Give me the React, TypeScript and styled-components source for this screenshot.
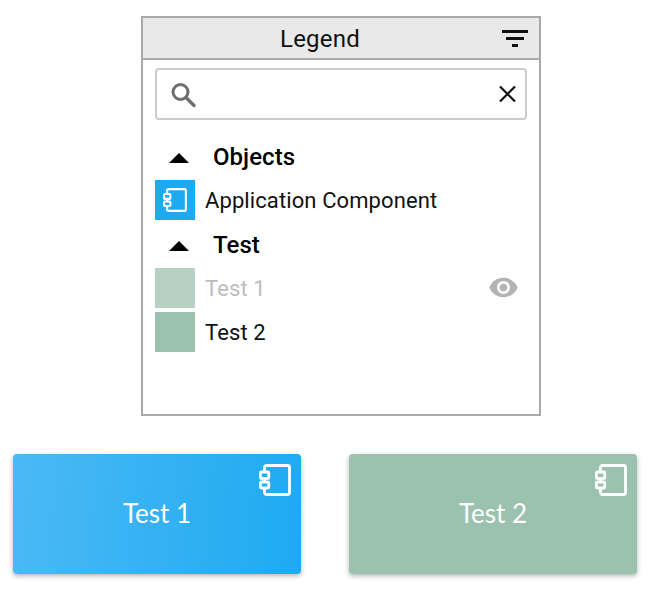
import React from 'react';
import styled, { createGlobalStyle } from 'styled-components';

const GlobalStyle = createGlobalStyle`
  html, body {
    margin: 0;
    padding: 0;
    background: #fff;
    font-family: "Roboto", "Liberation Sans", sans-serif;
  }
`;

const Page = styled.div`
  width: 653px;
  height: 596px;
  padding-top: 16px;
  box-sizing: border-box;
  overflow: hidden;
`;

const Panel = styled.section`
  width: 400px;
  height: 400px;
  margin-left: 141px;
  box-sizing: border-box;
  border: 2px solid #a9a9a9;
  display: flex;
  flex-direction: column;
`;

const Header = styled.header`
  position: relative;
  height: 42px;
  flex: none;
  box-sizing: border-box;
  background: #e9e9e9;
  border-bottom: 2px solid #a9a9a9;
  display: flex;
  align-items: center;
  justify-content: center;
  padding: 2px 42px 0 0;
`;

const Title = styled.h1`
  margin: 0;
  font-size: 24px;
  font-weight: 400;
  color: #111;
  letter-spacing: 0.2px;
`;

const FilterButton = styled.span`
  position: absolute;
  right: 10px;
  top: 11px;
  display: flex;
`;

const Body = styled.div`
  padding: 8px 12px 0;
  display: flex;
  flex-direction: column;
`;

const SearchBox = styled.div`
  height: 52px;
  box-sizing: border-box;
  border: 2px solid #cccccc;
  border-radius: 4px;
  display: flex;
  align-items: center;
  justify-content: space-between;
  padding: 0 6px 0 11.5px;
  margin-bottom: 16px;
`;

const SearchIcon = styled.svg`
  margin-top: 2px;
`;

const GroupRow = styled.div`
  height: 44px;
  display: flex;
  align-items: center;
  gap: 24px;
  padding-left: 14px;
`;

const GroupTitle = styled.span`
  font-size: 24px;
  font-weight: 500;
  color: #000;
  letter-spacing: 0.05px;
  margin-top: -2px;
`;

const Arrow = styled.span`
  width: 0;
  height: 0;
  border-left: 10px solid transparent;
  border-right: 10px solid transparent;
  border-bottom: 10px solid #000;
`;

const ItemRow = styled.div`
  height: 44px;
  display: flex;
  align-items: flex-start;
  gap: 10px;
  padding-right: 8px;
`;

const Swatch = styled.div<{ $color: string }>`
  width: 40px;
  height: 40px;
  flex: none;
  background: ${p => p.$color};
  display: flex;
  align-items: center;
  justify-content: center;
`;

const ItemLabel = styled.span<{ $muted?: boolean }>`
  font-size: 22px;
  line-height: 42px;
  color: ${p => (p.$muted ? '#bdbdbd' : '#111')};
  letter-spacing: 0.1px;
`;

const EyeIcon = styled.svg`
  margin-left: auto;
  margin-top: 4px;
`;

const Cards = styled.div`
  display: flex;
  gap: 48px;
  padding-left: 13px;
  margin-top: 38px;
`;

const Card = styled.div<{ $background: string }>`
  position: relative;
  width: 288px;
  height: 120px;
  padding-bottom: 2px;
  box-sizing: border-box;
  border-radius: 4px;
  background: ${p => p.$background};
  box-shadow: 0 2px 5px rgba(0, 0, 0, 0.3);
  display: flex;
  align-items: center;
  justify-content: center;
  font-family: "Lato", "Liberation Sans", sans-serif;
  font-size: 26px;
  color: #fff;
`;

const CardIcon = styled.span`
  position: absolute;
  top: 10px;
  right: 10px;
  display: flex;
`;

const ComponentIcon = ({ size }: { size: number }) => (
  <svg width={size} height={size} viewBox="0 0 32 32" fill="none" stroke="#fff" strokeWidth="2.8" strokeLinejoin="round">
    <path d="M5.5 7.5V3.5a2 2 0 0 1 2-2h21a2 2 0 0 1 2 2v25a2 2 0 0 1-2 2h-21a2 2 0 0 1-2-2v-5" />
    <path d="M5.5 14.5v3" />
    <rect x="1.4" y="8" width="8.4" height="6.5" rx="1" />
    <rect x="1.4" y="18" width="8.4" height="6" rx="1" />
  </svg>
);

export default function App() {
  return (
    <Page>
      <GlobalStyle />
      <Panel>
        <Header>
          <Title>Legend</Title>
          <FilterButton>
            <svg width="28" height="20" viewBox="0 0 28 20" fill="#111">
              <rect x="1" y="1" width="26" height="3" />
              <rect x="5" y="8" width="18" height="3" />
              <rect x="11" y="15" width="6" height="3" />
            </svg>
          </FilterButton>
        </Header>
        <Body>
          <SearchBox>
            <SearchIcon width="28" height="28" viewBox="0 0 28 28" fill="none" stroke="#6f6f6f">
              <circle cx="11.5" cy="11" r="7.5" strokeWidth="3" />
              <path d="M17 16.5l8 8" strokeWidth="3.4" strokeLinecap="round" />
            </SearchIcon>
            <svg width="24" height="24" viewBox="0 0 24 24" fill="none" stroke="#111" strokeWidth="2.2">
              <path d="M5 4.5l15 15M20 4.5l-15 15" />
            </svg>
          </SearchBox>
          <GroupRow>
            <Arrow />
            <GroupTitle>Objects</GroupTitle>
          </GroupRow>
          <ItemRow>
            <Swatch $color="#1eaaf1">
              <ComponentIcon size={24} />
            </Swatch>
            <ItemLabel>Application Component</ItemLabel>
          </ItemRow>
          <GroupRow>
            <Arrow />
            <GroupTitle>Test</GroupTitle>
          </GroupRow>
          <ItemRow>
            <Swatch $color="#b6d1c3" />
            <ItemLabel $muted>Test 1</ItemLabel>
            <EyeIcon width="31" height="31" viewBox="0 0 24 24" fill="#b3b3b3">
              <path d="M12 4.5C7 4.5 2.7 7.6 1 12c1.7 4.4 6 7.5 11 7.5s9.3-3.1 11-7.5c-1.7-4.4-6-7.5-11-7.5zM12 17c-2.8 0-5-2.2-5-5s2.2-5 5-5 5 2.2 5 5-2.2 5-5 5zm0-8c-1.7 0-3 1.3-3 3s1.3 3 3 3 3-1.3 3-3-1.3-3-3-3z" />
            </EyeIcon>
          </ItemRow>
          <ItemRow>
            <Swatch $color="#9ac2ae" />
            <ItemLabel>Test 2</ItemLabel>
          </ItemRow>
        </Body>
      </Panel>
      <Cards>
        <Card $background="linear-gradient(95deg, #4bb9f5 0%, #1eaaf1 100%)">
          Test 1
          <CardIcon>
            <ComponentIcon size={32} />
          </CardIcon>
        </Card>
        <Card $background="#9ac2ae">
          Test 2
          <CardIcon>
            <ComponentIcon size={32} />
          </CardIcon>
        </Card>
      </Cards>
    </Page>
  );
}
